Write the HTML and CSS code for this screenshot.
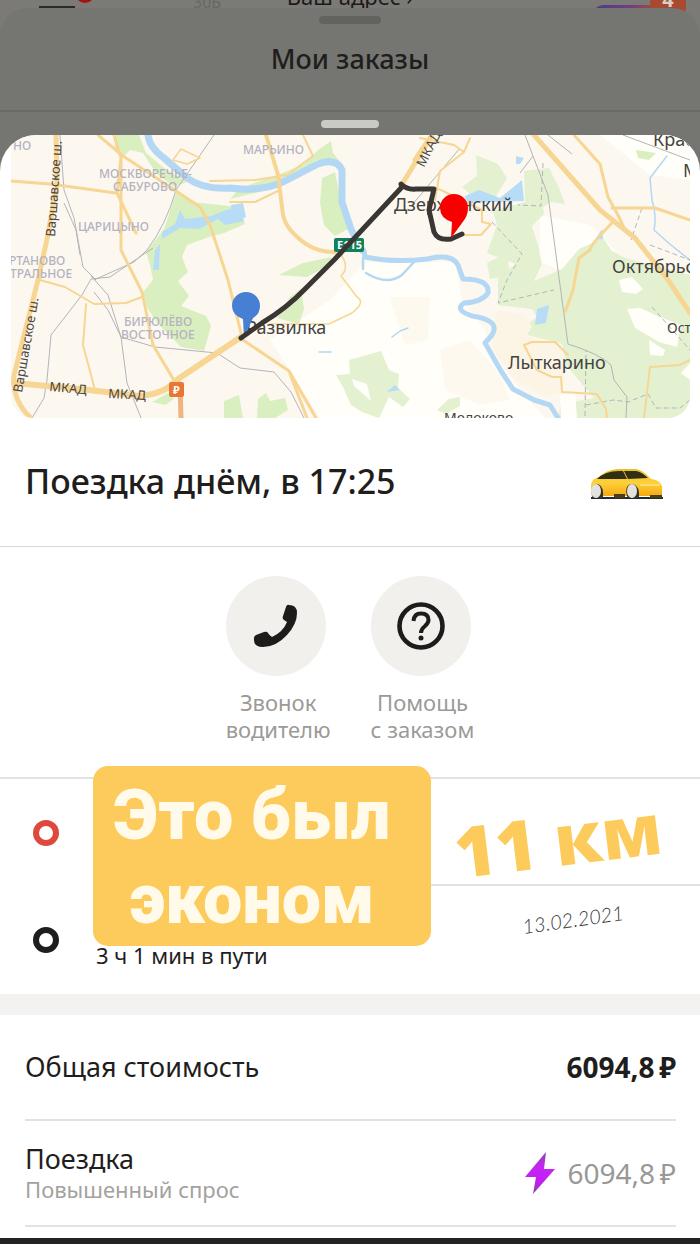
FILE: index.html
```html
<!DOCTYPE html>
<html lang="ru">
<head>
<meta charset="utf-8">
<meta name="viewport" content="width=device-width, initial-scale=1">
<title>Мои заказы</title>
<link rel="stylesheet" href="styles.css">
</head>
<body>
<div class="page">
  <header class="backdrop">
    <span class="menu"></span>
    <span class="menu-dot"></span>
    <span class="house">30Б</span>
    <span class="address">Ваш адрес ›</span>
    <span class="plus"></span>
    <span class="plus-badge">4</span>
  </header>

  <section class="orders">
    <span class="grip"></span>
    <h1 class="orders-title">Мои заказы</h1>
    <span class="sheet-grip"></span>
  </section>

  <main class="sheet">
    <div class="map">
      <svg class="map-canvas" viewBox="11 135 679 283" role="img" aria-label="Карта поездки">
        <rect x="11" y="135" width="679" height="283" fill="#fcf8f0"/>
        <g fill="#fffef8">
          <path d="M365 262L455 262L462 300L485 330L490 350L520 390L545 418L320 418L290 370L270 340L330 300Z"/>
          <path d="M540 215L590 225L615 250L575 275L540 262ZM600 135L690 135L690 180L650 175Z"/>
        </g>
        <g fill="#d9efc0">
          <path d="M116 135L139 135L146 153L164 168L187 182L174 187L156 173L143 153L130 150L122 158L114 150Z"/>
          <path d="M176 192L191 202L240 207L245 224L224 233L209 237L187 245L182 257L188 272L178 281L189 296L181 306L206 316L211 326L204 351L181 347L167 333L155 320L147 307L143 292L153 280L150 265L146 252L164 229L170 211Z"/>
          <path d="M318 150L331 141L333 153L342 164L336 167L317 160L300 172L275 188L230 199L240 188L280 174L304 164Z"/>
          <path d="M322 178L335 172L341 202L348 229L335 236L324 225L320 203Z"/>
          <path d="M303 263L332 257L325 267L307 277L279 275Z"/>
          <path d="M277 318L290 297L301 289L304 309L299 324Z"/>
          <path d="M224 401L239 395L243 418L224 418ZM258 399L266 393L270 401L285 398L288 410L275 418L257 418Z"/>
          <path d="M636 150L656 153L649 160L638 158ZM152 402L168 393L174 399L165 405Z"/>
        </g>
        <g fill="#e3f1d1">
          <path d="M476 155L498 164L507 178L496 196L471 195L462 187L477 176Z"/>
          <path d="M524 171L549 168L560 190L565 204L551 202L543 207L544 214L532 226L538 245L542 264L534 281L562 269L579 249L603 238L612 251L625 258L690 275L690 418L558 418L561 404L594 398L566 365L562 344L524 334L526 325L537 317L532 309L498 305L498 277L516 264L487 253L497 225L493 211L525 202Z"/>
          <path d="M349 360L381 351L389 370L399 374L398 388L410 399L403 407L389 397L379 418L362 412L351 405L343 387L336 375L350 374Z"/>
          <path d="M437 410L449 399L460 397L460 406L446 414ZM487 263L507 253L510 276L490 279Z"/>
        </g>
        <g fill="#fffef8">
          <path d="M619 280L632 277L643 289L636 294L622 292ZM627 309L640 308L660 317L681 325L677 347L659 342L635 328ZM649 340L665 350L663 356L650 355ZM560 395L575 392L577 418L561 418ZM681 373L690 363L690 380ZM352 379L367 384L371 401L354 386Z"/>
        </g>
        <g fill="#fcf5e6">
          <path d="M498 310L525 315L532 327L526 336L560 343L566 370L562 393L545 397L515 380L493 350L493 325Z"/>
        </g>
        <g fill="#fdf9ef">
          <path d="M390 297L430 297L428 340L405 345ZM440 350L470 340L500 375L510 400L480 405L445 390Z"/>
        </g>

        <g fill="none" stroke="#b4d8f4" stroke-linecap="round" stroke-linejoin="round">
          <path d="M148 135Q149 147 164 158L187 178Q204 190 230 188Q260 192 283 182L318 164Q336 157 342 170L342 202L351 229L362 250" stroke-width="7"/>
          <path d="M364 251L365 257Q395 263 427 259Q452 253 458 265L463 279Q490 279 488 293Q482 302 464 303Q454 310 472 316Q501 320 492 335L485 343L501 371L513 389L534 400L550 405L558 418" stroke-width="5"/>
          <path d="M363 258L363 269M366 273Q387 286 402 275L414 262" stroke-width="2.5"/>
          <path d="M667 156L650 178L652 200Q657 216 654 230Q670 245 690 260M392 337L400 331L408 328M319 352L331 352" stroke-width="1.5"/>
        </g>
        <g fill="#b8dcf5">
          <path d="M162 232L175 224L180 210L185 219L211 216L226 210L240 207L244 221L225 225L218 219L199 229L180 228L162 239Z"/>
          <path d="M155 250L160 244L159 270L153 270ZM231 205L243 203L246 217L239 220L231 217Z"/>
          <path d="M465 196L479 190L500 198L522 180L524 201L490 202L466 204ZM516 156L524 158L520 164L516 164ZM595 240L602 229L603 239ZM537 309L549 305L546 323L535 325ZM387 392L395 385L400 390Z"/>
        </g>

        <g fill="none" stroke="#b4b3b8" stroke-width="1">
          <path d="M60 135L64 190L74 218L83 267L96 280M64 203L76 230L80 255M214 135L176 190Q166 225 147 250L134 262L94 280M82 295L51 335L47 380L44 398L32 418M153 248L110 277L91 279L82 295M91 276L108 295L121 337L127 383L141 418M94 292L108 310L121 337M121 337L155 347L217 353L240 368L274 372L291 392L304 418"/>
          <path d="M525 135L533 156L548 195L560 285L568 344Q600 354 611 365L614 380L627 397L626 418M533 156L520 173M623 135L690 160M460 148L412 205M548 135L572 154"/>
          <g stroke-dasharray="5 3"><path d="M492 222L522 254L507 280L498 303L554 290M543 163L541 206L518 205M585 416L586 350M642 208L631 240M650 245L690 260M652 307L690 350M586 405L613 400L628 402L648 394L656 408L680 408L690 400"/></g>
        </g>
        <g fill="none" stroke="#f7d592" stroke-linejoin="round" stroke-linecap="round">
          <path d="M56 135L57 185L47 239L38 280L14 375Q12 400 30 417" stroke-width="5"/>
          <path d="M98 135L123 156L176 191L200 207L210 225L228 280L241 333" stroke-width="3"/>
          <path d="M114 135L121 158L117 193L136 233M121 158L121 250L142 292L153 345L175 382M11 181L50 184L116 193" stroke-width="3"/>
          <path d="M40 280L65 287L94 304L126 303L142 297M86 304L83 345L95 390" stroke-width="2"/>
          <path d="M266 135L278 175L283 215Q286 230 306 244Q318 252 334 252L341 255" stroke-width="4"/>
          <path d="M303 135L313 156L287 175L255 180L210 181M230 202L255 202L280 190" stroke-width="2"/>
          <path d="M341 255Q350 267 341 276L357 297Q366 302 352 313L329 324L270 324M173 160L181 149L200 158L187 164Z" stroke-width="1.5"/>
          <path d="M14 383L80 389L140 396Q165 394 178 379L241 337" stroke-width="6"/>
          <path d="M240 338L289 371L316 418M289 371L307 418" stroke-width="3"/>
          <path d="M180 384L181 418" stroke="#f0b47e" stroke-width="5"/>
          <path d="M401 186L432 135L415 160" stroke-width="5"/>
          <path d="M420 138L454 145L464 152L440 171L435 200M464 152L470 138M430 187L441 190L482 210L482 222L491 224L481 235L463 235" stroke-width="2"/>
          <path d="M534 135L600 210L635 238L668 280L690 313" stroke-width="5"/>
          <path d="M574 135L600 164L608 197L619 217L625 230M612 208L655 208L690 220M612 223Q590 245 590 250L579 258L573 290L565 312" stroke-width="3"/>
          <path d="M524 345L532 342L555 342L568 355M524 345L537 370L552 377L561 377L562 392L597 394L606 409L607 418M644 418L650 367L680 365L690 360" stroke-width="2"/>
        </g>

        <g class="district">
          <text x="13" y="150">НО</text>
          <text x="99" y="178">МОСКВОРЕЧЬЕ-</text>
          <text x="113" y="191">САБУРОВО</text>
          <text x="243" y="154">МАРЬИНО</text>
          <text x="78" y="231">ЦАРИЦЫНО</text>
          <text x="9" y="265">РТАНОВО</text>
          <text x="10" y="278">ТРАЛЬНОЕ</text>
          <text x="124" y="326">БИРЮЛЁВО</text>
          <text x="121" y="339">ВОСТОЧНОЕ</text>
        </g>
        <g class="road">
          <text transform="translate(55 237) rotate(-86)">Варшавское ш.</text>
          <text transform="translate(22 393) rotate(-80)">Варшавское ш.</text>
          <text transform="translate(49 391) rotate(5)">МКАД</text>
          <text transform="translate(108 398) rotate(3)">МКАД</text>
          <text transform="translate(424 168) rotate(-63)">МКАД</text>
        </g>
        <g class="town">
          <text x="394" y="211">Дзержинский</text>
          <text x="246" y="334">Развилка</text>
          <text x="508" y="369">Лыткарино</text>
          <text x="612" y="273">Октябрьский</text>
          <text x="653" y="146">Красково</text>
          <text x="683" y="177">М</text>
        </g>
        <g class="village">
          <text x="667" y="333">Остров</text>
          <text x="444" y="423">Молоково</text>
        </g>

        <rect x="334" y="238" width="30" height="14" rx="2" fill="#12805a"/>
        <text class="shield" x="337" y="249">E115</text>
        <rect x="169" y="382" width="15" height="15" rx="2" fill="#e87634"/>
        <text class="shield" x="173" y="394">₽</text>

        <path d="M232 306A14 14 0 1 1 260 306Q260 314 253 318L244 338L243 319Q232 315 232 306Z" fill="#467fd3"/>
        <path d="M241 338L262 323Q287 308 306 288L335 259L402 187L401 184Q407 190 416 189L434 189L429 210L434 232Q438 241 451 239L462 234" fill="none" stroke="#393634" stroke-width="5" stroke-linejoin="round" stroke-linecap="round"/>
        <path d="M440 208A14 14 0 1 1 468 208Q468 216 462 223L451 238L452 222Q440 218 440 208Z" fill="#f80000"/>
      </svg>
    </div>

    <section class="trip">
      <h2 class="trip-title">Поездка днём, в 17:25</h2>
      <svg class="car" viewBox="0 0 74 34" aria-hidden="true">
        <defs><linearGradient id="paint" x2="0" y2="1"><stop stop-color="#edbd26"/><stop offset=".5" stop-color="#fed039"/><stop offset="1" stop-color="#f5a913"/></linearGradient></defs>
        <path d="M1 31H73V33H1Z" fill="#28292a"/>
        <path d="M2 30L1 20Q1 13 9 11Q16 4 27 3H46Q53 4 61 13Q70 14 72 20V30Z" fill="url(#paint)"/>
        <path d="M7 13Q15 5 29 5H33L37 13ZM34 5H46Q52 6 58 12L38 13Z" fill="#303019"/>
        <path d="M24 28H35V32H24ZM60 29H72V32H60Z" fill="#4a3e18"/>
        <path d="M2 30Q0 18 8 18Q14 20 13 32H3ZM37 30Q34 18 43 18Q50 20 49 32H38Z" fill="#343325"/>
        <ellipse cx="6" cy="25" rx="5" ry="7" fill="#e4e2df"/><ellipse cx="42" cy="25" rx="5" ry="7" fill="#e4e2df"/>
        <path d="M50 19H70" stroke="#ffdf72" stroke-width="2"/>
      </svg>
    </section>

    <section class="actions">
      <button class="action" type="button">
        <span class="action-circle">
          <svg class="phone" viewBox="0 0 46 46" aria-hidden="true"><path d="M36 2Q34 1 33 4L30 13Q29 16 31 17L34 19Q30 29 19 34Q16 32 15 30Q14 28 11 29L3 32Q1 33 1 35Q0 44 10 44Q23 44 34 32Q44 21 44 10Q44 2 36 2Z" fill="#1d1c1b"/></svg>
        </span>
        <span>Звонок<br>водителю</span>
      </button>
      <button class="action" type="button">
        <span class="action-circle">
          <svg class="help" viewBox="0 0 48 48" fill="none" stroke="#1d1c1b" aria-hidden="true"><circle cx="24" cy="24" r="21.5" stroke-width="4.6"/><path d="M16.5 19Q17 11.500 24 11.500Q31.500 11.500 31.500 18Q31.500 21 28 24Q24 27 24 31" stroke-width="4"/><circle cx="24" cy="36" r="2.500" fill="#1d1c1b" stroke="none"/></svg>
        </span>
        <span>Помощь<br>с заказом</span>
      </button>
    </section>

    <section class="route">
      <div class="stop"><span class="ring ring-start"></span><span class="stop-text"></span></div>
      <div class="stop"><span class="ring"></span><span class="stop-text">3 ч 1 мин в пути</span></div>
      <div class="sticker">Это был<br>эконом</div>
      <div class="distance">11 км</div>
      <time class="date" datetime="2021-02-13">13.02.2021</time>
    </section>

    <section class="costs">
      <div class="cost">
        <span>Общая стоимость</span>
        <strong class="price">6094,8&#8201;₽</strong>
      </div>
      <div class="cost">
        <span>Поездка<small class="note">Повышенный спрос</small></span>
        <span class="price price-muted">
          <svg class="bolt" viewBox="0 0 30 42" aria-hidden="true"><defs><linearGradient id="surge" x2="0" y2="1"><stop stop-color="#8c43a8"/><stop offset=".35" stop-color="#c326f2"/><stop offset=".7" stop-color="#c21df5"/><stop offset="1" stop-color="#864598"/></linearGradient></defs><path d="M21 0L0 25L11 25L8 42L30 17L19 17Z" fill="url(#surge)"/></svg>
          6094,8&#8201;₽
        </span>
      </div>
    </section>
  </main>
  <footer class="bottom-bar"></footer>
</div>
</body>
</html>
```
FILE: styles.css
```css
* { box-sizing: border-box; }

body {
  margin: 0;
  background: #fff;
  color: #1f1e1d;
  font-family: "Noto Sans", "Open Sans", sans-serif;
}

.page {
  min-height: 100vh;
  display: flex;
  flex-direction: column;
  background: #757572;
}

/* Dimmed screen behind the sheets */
.backdrop {
  position: relative;
  height: 36px;
  margin-bottom: -28px;
  background: #7b7a77;
  overflow: hidden;
}

.menu {
  position: absolute;
  left: 39px;
  top: 6px;
  width: 36px;
  height: 2px;
  background: #2c2b29;
}

.menu-dot {
  position: absolute;
  left: 75px;
  top: -17px;
  width: 20px;
  height: 20px;
  border-radius: 50%;
  background: #a31410;
}

.house {
  position: absolute;
  left: 193px;
  top: -10px;
  color: #686765;
  font-size: 16px;
  line-height: 24px;
}

.address {
  position: absolute;
  left: 0;
  right: 0;
  top: -16px;
  text-align: center;
  color: #1b1a19;
  font-size: 22px;
  line-height: 24px;
}

.plus {
  position: absolute;
  right: 40px;
  top: 5px;
  width: 68px;
  height: 24px;
  border-radius: 12px;
  background: linear-gradient(90deg, #4a3a86, #74407c 60%, #b04a30);
}

.plus-badge {
  position: absolute;
  right: 14px;
  top: -18px;
  width: 36px;
  height: 36px;
  border-radius: 10px;
  background: #a84a30;
  color: #d8d0c8;
  font-size: 20px;
  font-weight: 700;
  line-height: 36px;
  text-align: center;
}

.orders {
  position: relative;
  height: 155px;
  margin-bottom: -28px;
  padding-top: 8px;
  display: flex;
  flex-direction: column;
  align-items: center;
  border-radius: 28px 28px 0 0;
  background: #757572;
}

.grip,
.sheet-grip {
  width: 62px;
  height: 8px;
  border-radius: 4px;
  background: #62625f;
}

.orders-title {
  width: 100%;
  height: 88px;
  margin: 0;
  padding-top: 15px;
  border-bottom: 2px solid #696966;
  font-size: 27px;
  font-weight: 500;
  line-height: 40px;
  text-align: center;
}

.sheet-grip {
  width: 58px;
  margin-top: 8px;
  background: #c9c9c6;
}

.sheet {
  position: relative;
  flex: 1;
  border-radius: 36px 36px 0 0;
  background: #fff;
  overflow: hidden;
}

.map {
  margin: 0 10px 0 11px;
  border-radius: 0 0 22px 22px;
  overflow: hidden;
}

.map-canvas {
  display: block;
  width: 100%;
  height: auto;
}

.district { fill: #b5b2c0; font-size: 12px; font-weight: 500; }
.road { fill: #4b4744; font-size: 13px; }
.town { fill: #44423f; font-size: 18px; }
.village { fill: #44423f; font-size: 14px; }
.shield { fill: #fff; font-size: 11px; font-weight: 700; }

.trip {
  height: 129px;
  padding: 0 36px 3px 25px;
  display: flex;
  align-items: center;
  justify-content: space-between;
  border-bottom: 1px solid #d9d9d9;
}

.trip-title {
  margin: 0;
  font-size: 34px;
  font-weight: 500;
  line-height: 44px;
}

.car { width: 74px; height: 34px; margin-top: 4px; }

.actions {
  padding: 29px 24px 34px;
  display: flex;
  justify-content: center;
  gap: 40px;
  border-bottom: 2px solid #e2e2e2;
}

.action {
  padding: 0;
  border: 0;
  display: flex;
  flex-direction: column;
  gap: 13px;
  background: none;
  color: #9b9a98;
  font: 22px/27px "Noto Sans", sans-serif;
  text-align: center;
}

.action-circle {
  width: 100px;
  height: 100px;
  border-radius: 50%;
  display: grid;
  place-items: center;
  align-self: flex-start;
  background: #f1f0ed;
}

.phone { width: 46px; height: 46px; }
.help { width: 48px; height: 48px; }

.route {
  position: relative;
  height: 236px;
  border-bottom: 21px solid #f3f2f1;
}

.stop {
  height: 107px;
  padding-left: 33px;
  display: flex;
  align-items: center;
  gap: 37px;
}

.ring {
  width: 26px;
  height: 26px;
  border: 6px solid #1f1e1d;
  border-radius: 50%;
}

.ring-start { border-color: #df483d; }

.stop-text {
  flex: 1;
  align-self: stretch;
  font-size: 22px;
  line-height: 28px;
}

.stop:first-child .stop-text { border-bottom: 2px solid #e2e2e2; }
.stop:nth-child(2) .stop-text { padding-top: 55px; }

.sticker {
  position: absolute;
  left: 93px;
  top: -13px;
  width: 338px;
  height: 180px;
  padding: 7px 20px 0 0;
  border-radius: 15px;
  background: #fccb5b;
  color: #fffaea;
  font: 900 70px/84px Roboto, sans-serif;
  text-align: center;
}

.distance {
  position: absolute;
  left: 454px;
  top: 12px;
  color: #fccb5b;
  font-family: "Open Sans", "Noto Sans", sans-serif;
  font-size: 70px;
  font-weight: 800;
  line-height: 96px;
  white-space: nowrap;
  transform: rotate(-7deg);
}

.date {
  position: absolute;
  left: 522px;
  top: 126px;
  color: #3d3c3b;
  font: italic 300 20px/28px Lato, sans-serif;
  transform: rotate(-8deg);
}

.costs { padding: 0 24px 0 25px; }

.cost {
  height: 106px;
  display: flex;
  align-items: center;
  justify-content: space-between;
  border-bottom: 2px solid #e2e2e2;
  font-size: 27px;
  line-height: 32px;
}

.note {
  display: block;
  color: #a3a2a0;
  font-size: 22px;
  line-height: 28px;
}

.price {
  display: flex;
  align-items: center;
  gap: 12px;
  font-size: 28px;
}

.price-muted { color: #999896; }
.bolt { width: 30px; height: 42px; }

.bottom-bar { height: 6px; background: #222; }
```
